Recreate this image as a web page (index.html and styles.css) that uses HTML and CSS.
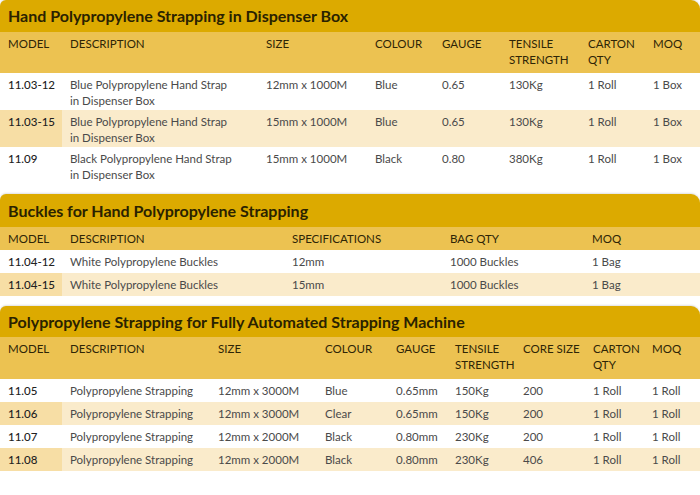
FILE: index.html
```html
<!DOCTYPE html>
<html>
<head>
<meta charset="utf-8">
<link rel="stylesheet" href="styles.css">
</head>
<body>
<section class="sec sec1">
  <h2 class="title">Hand Polypropylene Strapping in Dispenser Box</h2>
  <table class="tbl">
    <colgroup><col class="c62"><col class="c196"><col class="c109"><col class="c67"><col class="c67"><col class="c79"><col class="c65"><col></colgroup>
    <thead>
      <tr class="head tall"><th>MODEL</th><th>DESCRIPTION</th><th>SIZE</th><th>COLOUR</th><th>GAUGE</th><th>TENSILE<br>STRENGTH</th><th>CARTON<br>QTY</th><th>MOQ</th></tr>
    </thead>
    <tbody>
      <tr class="two"><td class="model">11.03-12</td><td>Blue Polypropylene Hand Strap<br>in Dispenser Box</td><td>12mm x 1000M</td><td>Blue</td><td>0.65</td><td>130Kg</td><td>1 Roll</td><td>1 Box</td></tr>
      <tr class="two alt"><td class="model">11.03-15</td><td>Blue Polypropylene Hand Strap<br>in Dispenser Box</td><td>15mm x 1000M</td><td>Blue</td><td>0.65</td><td>130Kg</td><td>1 Roll</td><td>1 Box</td></tr>
      <tr class="two"><td class="model">11.09</td><td>Black Polypropylene Hand Strap<br>in Dispenser Box</td><td>15mm x 1000M</td><td>Black</td><td>0.80</td><td>380Kg</td><td>1 Roll</td><td>1 Box</td></tr>
    </tbody>
  </table>
</section>

<section class="sec sec2">
  <h2 class="title">Buckles for Hand Polypropylene Strapping</h2>
  <table class="tbl">
    <colgroup><col class="c62"><col class="c222"><col class="c158"><col class="c142"><col></colgroup>
    <thead>
      <tr class="head"><th>MODEL</th><th>DESCRIPTION</th><th>SPECIFICATIONS</th><th>BAG QTY</th><th>MOQ</th></tr>
    </thead>
    <tbody>
      <tr><td class="model">11.04-12</td><td>White Polypropylene Buckles</td><td>12mm</td><td>1000 Buckles</td><td>1 Bag</td></tr>
      <tr class="alt"><td class="model">11.04-15</td><td>White Polypropylene Buckles</td><td>15mm</td><td>1000 Buckles</td><td>1 Bag</td></tr>
    </tbody>
  </table>
</section>

<section class="sec sec3">
  <h2 class="title">Polypropylene Strapping for Fully Automated Strapping Machine</h2>
  <table class="tbl">
    <colgroup><col class="c62"><col class="c148"><col class="c107"><col class="c71"><col class="c59"><col class="c68"><col class="c70"><col class="c59"><col></colgroup>
    <thead>
      <tr class="head tall"><th>MODEL</th><th>DESCRIPTION</th><th>SIZE</th><th>COLOUR</th><th>GAUGE</th><th>TENSILE<br>STRENGTH</th><th>CORE SIZE</th><th>CARTON<br>QTY</th><th>MOQ</th></tr>
    </thead>
    <tbody>
      <tr><td class="model">11.05</td><td>Polypropylene Strapping</td><td>12mm x 3000M</td><td>Blue</td><td>0.65mm</td><td>150Kg</td><td>200</td><td>1 Roll</td><td>1 Roll</td></tr>
      <tr class="alt"><td class="model">11.06</td><td>Polypropylene Strapping</td><td>12mm x 3000M</td><td>Clear</td><td>0.65mm</td><td>150Kg</td><td>200</td><td>1 Roll</td><td>1 Roll</td></tr>
      <tr><td class="model">11.07</td><td>Polypropylene Strapping</td><td>12mm x 2000M</td><td>Black</td><td>0.80mm</td><td>230Kg</td><td>200</td><td>1 Roll</td><td>1 Roll</td></tr>
      <tr class="alt"><td class="model">11.08</td><td>Polypropylene Strapping</td><td>12mm x 2000M</td><td>Black</td><td>0.80mm</td><td>230Kg</td><td>406</td><td>1 Roll</td><td>1 Roll</td></tr>
    </tbody>
  </table>
</section>
</body>
</html>
```

FILE: styles.css
```css
html, body {
  margin: 0;
  padding: 0;
  background: #ffffff;
}
body {
  font-family: "Lato", "Open Sans", sans-serif;
  font-size: 11.5px;
  color: #4a4a4a;
  width: 700px;
}
.sec {
  display: flex;
  flex-direction: column;
}
.sec2 { margin-top: 10px; }
.sec3 { margin-top: 10px; }
.title {
  margin: 0;
  height: 32px;
  line-height: 32px;
  padding: 0 8px;
  background: #dcaa00;
  border-radius: 6px 9px 0 0;
  font-size: 16px;
  font-weight: 700;
  color: #2a2200;
  box-shadow: 0 -1px 2px rgba(0, 0, 0, 0.12);
  white-space: nowrap;
}
.sec2 .title {
  height: 33px;
  line-height: 33px;
}
.sec3 .title {
  height: 31px;
  line-height: 31px;
}
.tbl {
  width: 700px;
  border-collapse: collapse;
  table-layout: fixed;
}
.c62 { width: 62px; }
.c196 { width: 196px; }
.c109 { width: 109px; }
.c67 { width: 67px; }
.c79 { width: 79px; }
.c65 { width: 65px; }
.c222 { width: 222px; }
.c158 { width: 158px; }
.c142 { width: 142px; }
.c148 { width: 148px; }
.c107 { width: 107px; }
.c71 { width: 71px; }
.c59 { width: 59px; }
.c68 { width: 68px; }
.c70 { width: 70px; }
th, td {
  text-align: left;
  vertical-align: top;
  padding: 4px 8px 3px;
  line-height: 16px;
  white-space: nowrap;
}
.head th {
  background: #ecc251;
  color: #2e2506;
  font-weight: 400;
  font-size: 11.5px;
}
.head.tall th {
  padding-bottom: 5px;
  height: 32px;
}
.sec3 .head.tall th {
  padding-bottom: 6px;
}
.two td {
  padding-bottom: 1px;
}
.model {
  color: #222222;
  font-weight: 500;
}
.alt td {
  background: #faebcb;
}
.alt td.model {
  background: #f7dea5;
}
```
